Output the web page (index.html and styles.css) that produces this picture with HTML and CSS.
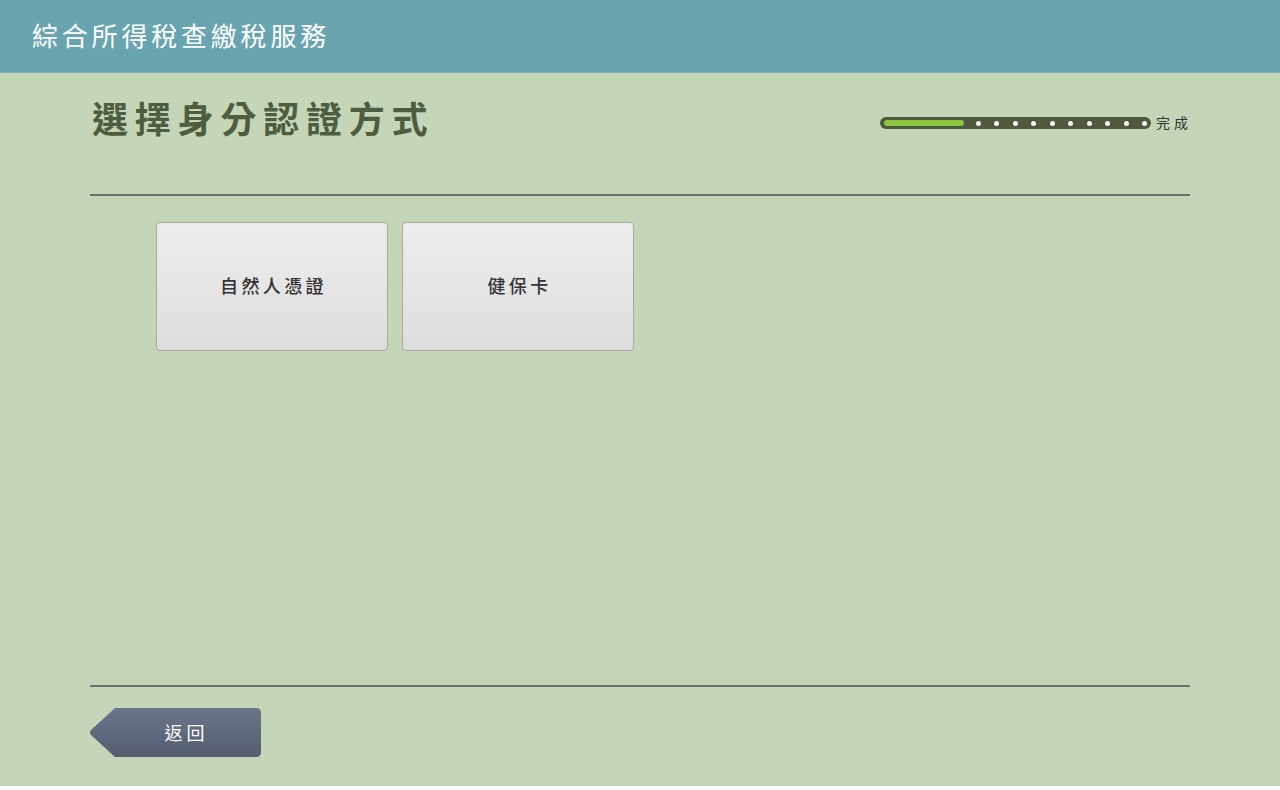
FILE: index.html
```html
<!DOCTYPE html>
<html lang="zh-Hant">
<head>
<meta charset="utf-8">
<title>綜合所得稅查繳稅服務</title>
<link rel="stylesheet" href="styles.css">
</head>
<body>
<div class="page">
  <header class="topbar">
    <h1 class="app-title">綜合所得稅查繳稅服務</h1>
  </header>
  <main class="content">
    <div class="title-row">
      <h2 class="page-title">選擇身分認證方式</h2>
      <div class="progress">
        <div class="track">
          <span class="fill"></span>
          <span class="dots">
            <i class="dot"></i><i class="dot"></i><i class="dot"></i><i class="dot"></i><i class="dot"></i>
            <i class="dot"></i><i class="dot"></i><i class="dot"></i><i class="dot"></i><i class="dot"></i>
          </span>
        </div>
        <span class="done">完成</span>
      </div>
    </div>
    <hr class="rule rule-top">
    <div class="options">
      <button class="option">自然人憑證</button>
      <button class="option">健保卡</button>
    </div>
    <hr class="rule">
    <div class="footer">
      <button class="back">返回</button>
    </div>
  </main>
</div>
</body>
</html>
```

FILE: styles.css
```css
* { box-sizing: border-box; }
html, body {
  margin: 0;
  padding: 0;
  background: #ffffff;
  font-family: "Noto Sans CJK TC", "Noto Sans", sans-serif;
}
.page {
  height: 786px;
  background: #c5d5b7;
  display: flex;
  flex-direction: column;
}
.topbar {
  height: 73px;
  flex: 0 0 73px;
  background: #68a5b1;
  display: flex;
  align-items: center;
  padding-left: 32px;
  border-bottom: 1px solid #7fb0b4;
}
.app-title {
  margin: 0;
  font-size: 26px;
  font-weight: normal;
  color: #ffffff;
  letter-spacing: 3.8px;
  line-height: 1;
  margin-top: -2px;
}
.content {
  width: 1100px;
  margin: 0 auto;
  flex: 1;
  display: flex;
  flex-direction: column;
}
.title-row {
  margin-top: 22px;
  display: flex;
  justify-content: space-between;
  align-items: flex-start;
  height: 44px;
}
.page-title {
  margin: 0;
  padding-left: 2px;
  font-size: 36px;
  line-height: 44px;
  font-weight: bold;
  color: #4f5d3f;
  letter-spacing: 6.8px;
}
.progress {
  margin-top: 22px;
  display: flex;
  align-items: center;
}
.track {
  width: 271px;
  height: 12px;
  border-radius: 6px;
  background: #4d5a3d;
  display: flex;
  align-items: center;
  padding: 0 4px 0 4px;
}
.fill {
  width: 80px;
  height: 6px;
  border-radius: 3px;
  background: #8dc63f;
}
.dots {
  flex: 1;
  margin-left: 12px;
  display: flex;
  justify-content: space-between;
  align-items: center;
}
.dot {
  width: 5px;
  height: 5px;
  border-radius: 50%;
  background: #f4f4f4;
}
.done {
  margin-left: 5px;
  margin-top: -2px;
  font-size: 14px;
  color: #333333;
  letter-spacing: 4px;
  line-height: 1;
  margin-right: -2px;
}
.rule {
  margin: 0;
  height: 0;
  border: 0;
  border-top: 2px solid #6e6e6e;
}
.rule-top {
  margin-top: 55px;
}
.options {
  flex: 1;
  padding-top: 26px;
  padding-left: 66px;
  display: flex;
  align-items: flex-start;
  gap: 14px;
}
.option {
  width: 232px;
  height: 129px;
  border: 1px solid #a8a8a8;
  border-radius: 4px;
  background: linear-gradient(#ededed, #dedede);
  font-family: "Noto Sans CJK TC", "Noto Sans", sans-serif;
  font-size: 18px;
  font-weight: 500;
  color: #333333;
  letter-spacing: 3.4px;
  padding: 0 0 3px 3px;
  cursor: pointer;
}
.footer {
  margin-top: 21px;
  margin-bottom: 29px;
  display: flex;
}
.back {
  width: 171px;
  height: 49px;
  border: 0;
  padding: 0 0 2px 22px;
  background: linear-gradient(#6b7589, #545d71);
  clip-path: path('M25 0 L166 0 Q171 0 171 5 L171 44 Q171 49 166 49 L25 49 L1 27 Q-1 24.5 1 22 Z');
  font-family: "Noto Sans CJK TC", "Noto Sans", sans-serif;
  font-size: 18px;
  color: #ffffff;
  letter-spacing: 4px;
  cursor: pointer;
}
```
